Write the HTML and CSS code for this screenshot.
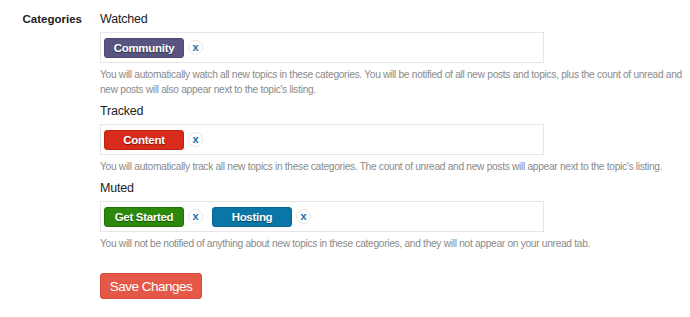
FILE: index.html
```html
<!DOCTYPE html>
<html>

<head>
    <meta charset="utf-8">
    <title>Category Preferences</title>
    <link rel="stylesheet" href="styles.css">
</head>

<body>
    <form class="prefs">
        <div class="control-group">
            <label class="control-label">Categories</label>
            <div class="controls">
                <div class="field-title">Watched</div>
                <div class="chooser">
                    <span class="badge badge-purple">Community</span><span class="remove">x</span>
                </div>
                <div class="instructions">You will automatically watch all new topics in these categories. You will be notified of all new posts and topics, plus the count of unread and new posts will also appear next to the topic's listing.</div>

                <div class="field-title">Tracked</div>
                <div class="chooser">
                    <span class="badge badge-red">Content</span><span class="remove">x</span>
                </div>
                <div class="instructions">You will automatically track all new topics in these categories. The count of unread and new posts will appear next to the topic's listing.</div>

                <div class="field-title">Muted</div>
                <div class="chooser">
                    <span class="badge badge-green">Get Started</span><span class="remove">x</span>
                    <span class="badge badge-blue">Hosting</span><span class="remove">x</span>
                </div>
                <div class="instructions">You will not be notified of anything about new topics in these categories, and they will not appear on your unread tab.</div>

                <button type="submit" class="btn-save">Save Changes</button>
            </div>
        </div>
    </form>
</body>

</html>
```

FILE: styles.css
```css
body {
margin: 0;
font-family: "Liberation Sans", Arial, sans-serif;
background-color: #fff;
color: #222;
}

.prefs {
padding-top: 11px;
}

.control-group {
display: flex;
}

.control-label {
width: 82px;
padding-right: 18px;
text-align: right;
font-weight: bold;
font-size: 11.5px;
line-height: 16px;
color: #222;
}

.controls {
width: 590px;
}

.field-title {
font-size: 12.5px;
line-height: 16px;
letter-spacing: -0.2px;
margin-bottom: 5px;
}

.chooser {
width: 439px;
height: 29px;
border: 1px solid #e6e6e6;
display: flex;
align-items: center;
padding-left: 3px;
}

.badge {
display: inline-block;
width: 80px;
height: 20px;
line-height: 19px;
border-radius: 3px;
text-align: center;
font-weight: bold;
font-size: 11.5px;
letter-spacing: -0.3px;
color: #fff;
text-shadow: 0 1px 1px rgba(0, 0, 0, 0.45);
box-sizing: border-box;
}

.badge-purple {
background-color: #595581;
border: 1px solid #4c486f;
}

.badge-red {
background-color: #d92b1c;
border: 1px solid #c02214;
}

.badge-green {
background-color: #2b8a0b;
border: 1px solid #237206;
}

.badge-blue {
background-color: #0a76a8;
border: 1px solid #08668f;
}

.remove {
display: inline-block;
width: 13px;
height: 13px;
line-height: 12px;
border: 1px solid #e6e6e6;
border-radius: 50%;
text-align: center;
font-weight: bold;
font-size: 11px;
color: #1370a8;
margin-left: 4px;
margin-right: 9px;
}

.instructions {
font-size: 10.2px;
line-height: 15px;
letter-spacing: -0.3px;
color: #8a8a8a;
margin-top: 4px;
margin-bottom: 6px;
}

.btn-save {
margin-top: 16px;
background-color: #e45848;
color: #fff;
border: 1px solid #d94a3a;
border-radius: 3px;
width: 102px;
height: 26px;
padding: 0;
font-family: "Liberation Sans", Arial, sans-serif;
font-size: 13.5px;
letter-spacing: -0.5px;
cursor: pointer;
}
```
